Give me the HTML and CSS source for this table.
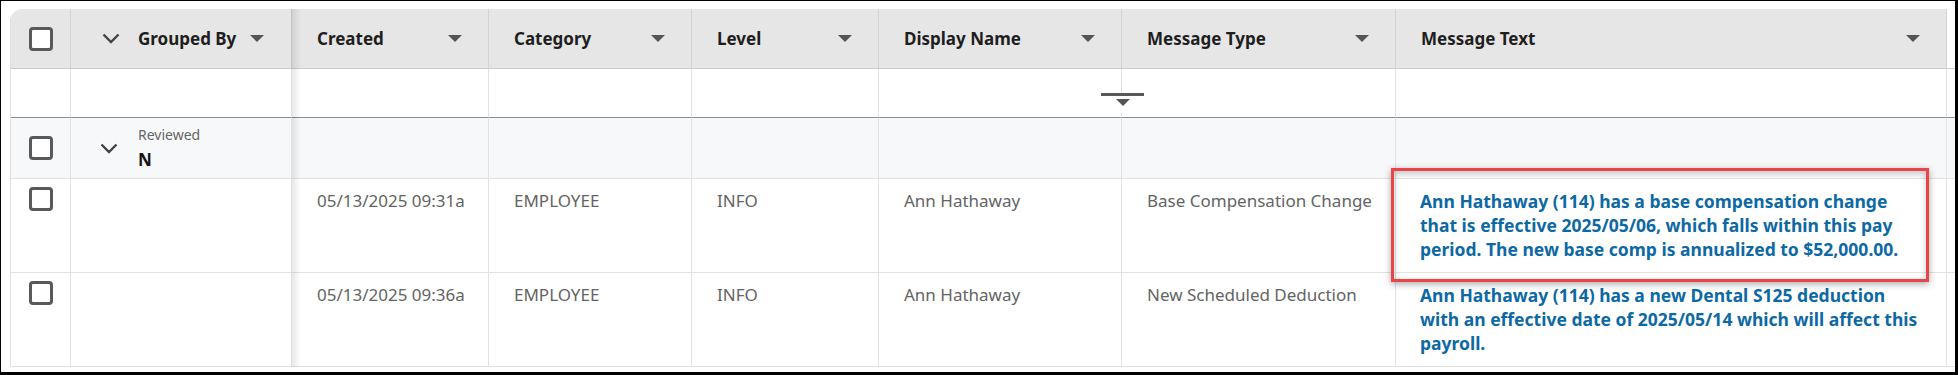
FILE: index.html
```html
<!DOCTYPE html>
<html lang="en">
<head>
<meta charset="utf-8">
<title>Messages</title>
<link rel="stylesheet" href="styles.css">
</head>
<body>
<div class="frame">
  <div class="grid">
    <!-- header -->
    <div class="hc hc-first"><span class="cb"></span></div>
    <div class="hc hc-group pinned">
      <svg class="chev" width="18" height="11" viewBox="0 0 18 11"><polyline points="1.5,1.5 9,9 16.5,1.5" fill="none" stroke="#444" stroke-width="2.4"/></svg>
      <span class="htext">Grouped By</span><span class="tri tri-inline"></span>
    </div>
    <div class="hc"><span class="htext">Created</span><span class="tri"></span></div>
    <div class="hc"><span class="htext">Category</span><span class="tri"></span></div>
    <div class="hc"><span class="htext">Level</span><span class="tri"></span></div>
    <div class="hc"><span class="htext">Display Name</span><span class="tri"></span></div>
    <div class="hc"><span class="htext">Message Type</span><span class="tri"></span></div>
    <div class="hc"><span class="htext">Message Text</span><span class="tri"></span></div>
    <div class="hc hc-blank"></div>

    <!-- filter row -->
    <div class="fc"></div>
    <div class="fc pinned"></div>
    <div class="fc"></div>
    <div class="fc"></div>
    <div class="fc"></div>
    <div class="fc"></div>
    <div class="fc fc-drop"><span class="drop-ind"><span class="drop-bar"></span><span class="tri"></span></span></div>
    <div class="fc"></div>
    <div class="fc"></div>

    <!-- group row -->
    <div class="gc gc-check"><span class="cb"></span></div>
    <div class="gc gc-group pinned">
      <svg class="chev" width="18" height="11" viewBox="0 0 18 11"><polyline points="1.5,1.5 9,9 16.5,1.5" fill="none" stroke="#444" stroke-width="2.4"/></svg>
      <div class="group-label"><span class="group-key">Reviewed</span><span class="group-val">N</span></div>
    </div>
    <div class="gc"></div>
    <div class="gc"></div>
    <div class="gc"></div>
    <div class="gc"></div>
    <div class="gc"></div>
    <div class="gc"></div>
    <div class="gc"></div>

    <!-- row 1 -->
    <div class="dc dc-check"><span class="cb"></span></div>
    <div class="dc pinned"></div>
    <div class="dc">05/13/2025 09:31a</div>
    <div class="dc">EMPLOYEE</div>
    <div class="dc">INFO</div>
    <div class="dc">Ann Hathaway</div>
    <div class="dc">Base Compensation Change</div>
    <div class="dc msg">Ann Hathaway (114) has a base compensation change that is effective 2025/05/06, which falls within this pay period. The new base comp is annualized to $52,000.00.</div>
    <div class="dc"></div>

    <!-- row 2 -->
    <div class="dc dc-check"><span class="cb"></span></div>
    <div class="dc pinned"></div>
    <div class="dc">05/13/2025 09:36a</div>
    <div class="dc">EMPLOYEE</div>
    <div class="dc">INFO</div>
    <div class="dc">Ann Hathaway</div>
    <div class="dc">New Scheduled Deduction</div>
    <div class="dc msg">Ann Hathaway (114) has a new Dental S125 deduction with an effective date of 2025/05/14 which will affect this payroll.</div>
    <div class="dc"></div>
  </div>
  <div class="highlight"></div>
</div>
</body>
</html>
```

FILE: styles.css
```css
* { box-sizing: border-box; }

html, body {
  margin: 0;
  padding: 0;
  background: #fff;
}

body {
  font-family: "Noto Sans", "Open Sans", "Liberation Sans", sans-serif;
  font-size: 17px;
  color: #646464;
}

.frame {
  position: relative;
  width: 1958px;
  height: 375px;
  border-style: solid;
  border-color: #000;
  border-width: 1px 3px 3px 1px;
  padding: 8px 0 0 9px;
  overflow: hidden;
  background: #fff;
}

.grid {
  display: grid;
  grid-template-columns: 60px 221px 197px 203px 187px 243px 274px 551px 120px;
  grid-template-rows: 60px 49px 61px 94px 94px;
  width: max-content;
  border-left: 1px solid #e0e0e0;
  border-top-left-radius: 12px;
  overflow: hidden;
}

.grid > div {
  border-right: 1px solid #e2e2e2;
  border-bottom: 1px solid #e2e2e2;
  min-width: 0;
}

.pinned {
  position: relative;
  z-index: 1;
}
.pinned::after {
  content: "";
  position: absolute;
  top: 0;
  bottom: -1px;
  right: -10px;
  width: 9px;
  background: linear-gradient(to right, rgba(0,0,0,0.09), rgba(0,0,0,0));
  pointer-events: none;
}

/* header */
.hc {
  background: #e6e6e6;
  display: flex;
  align-items: center;
  justify-content: space-between;
  padding: 0 26px 0 25px;
  border-right-color: #d3d3d3 !important;
  border-bottom-color: #cbcbcb !important;
}
.hc-first {
  justify-content: center;
  padding: 0;
  border-top-left-radius: 11px;
}
.hc-group {
  justify-content: flex-start;
  padding-left: 31px;
  border-right-color: #c4c4c4 !important;
}
.hc-blank {
  background: #fff;
}
.htext {
  font-weight: 700;
  color: #1e1e1e;
  font-size: 17px;
  white-space: nowrap;
}
.chev {
  display: block;
  flex: none;
}
.hc-group .chev {
  margin-right: 18px;
}
.tri {
  display: block;
  flex: none;
  width: 0;
  height: 0;
  border-left: 7px solid transparent;
  border-right: 7px solid transparent;
  border-top: 7px solid #555;
}
.tri-inline {
  margin-left: 14px;
}

/* checkbox */
.cb {
  display: block;
  width: 24px;
  height: 24px;
  border: 3px solid #595959;
  border-radius: 4px;
  background: #fff;
}

/* filter row */
.fc {
  background: #fff;
  border-bottom-color: #8d8d8d !important;
}
.fc-drop {
  position: relative;
}
.drop-ind {
  position: absolute;
  left: -21px;
  top: 24px;
  width: 43px;
  height: 20px;
  background: #fff;
  display: flex;
  flex-direction: column;
  align-items: center;
  z-index: 2;
}
.drop-bar {
  display: block;
  width: 43px;
  height: 3px;
  background: #585858;
  margin-bottom: 3px;
}

/* group row */
.gc {
  background: #f7f8f9;
}
.gc-check {
  display: flex;
  align-items: center;
  justify-content: center;
}
.gc-group {
  display: flex;
  align-items: center;
  padding-left: 29px;
}
.gc-group .chev {
  margin-right: 20px;
}
.group-label {
  display: flex;
  flex-direction: column;
}
.group-key {
  font-size: 14px;
  line-height: 20px;
  color: #666;
}
.group-val {
  font-size: 17px;
  line-height: 24px;
  font-weight: 700;
  color: #151515;
  margin-top: 3px;
}

/* data rows */
.dc {
  background: #fff;
  padding: 10px 26px 0 25px;
  line-height: 24px;
  white-space: nowrap;
}
.dc-check {
  padding: 8px 0 0 0;
  display: flex;
  justify-content: center;
  align-items: flex-start;
}
.msg {
  white-space: normal;
  font-weight: 700;
  font-size: 17.5px;
  color: #0d69a3;
  padding-left: 24px;
  padding-right: 22px;
}

/* annotation */
.highlight {
  position: absolute;
  left: 1390px;
  top: 167px;
  width: 538px;
  height: 114px;
  border: 3px solid #ea4446;
  box-shadow: 0 2px 7px rgba(0,0,0,0.35), inset 0 2px 6px rgba(0,0,0,0.22);
  pointer-events: none;
  z-index: 3;
}
```
